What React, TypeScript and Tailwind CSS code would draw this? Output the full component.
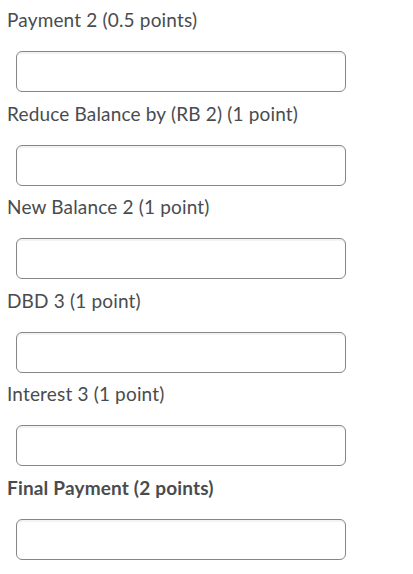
import React from "react";

const items: { label: string; bold?: boolean }[] = [
  { label: "Payment 2 (0.5 points)" },
  { label: "Reduce Balance by (RB 2) (1 point)" },
  { label: "New Balance 2 (1 point)" },
  { label: "DBD 3 (1 point)" },
  { label: "Interest 3 (1 point)" },
  { label: "Final Payment (2 points)", bold: true },
];

export default function App() {
  return (
    <div className="w-[413px] h-[574px] bg-white pl-[7px] pt-[9px] text-[#494c4e] [font-family:Lato,'Noto_Sans',sans-serif]">
      {items.map((it) => (
        <div key={it.label} className="h-[93.5px]">
          <div className={`text-[19px] leading-[22px] tracking-[0.17px] ${it.bold ? "font-bold" : "font-normal"}`}>{it.label}</div>
          <div className="mt-[20px] ml-[9px] w-[330px] h-[41px] rounded-[6px] border border-[#868686] bg-white shadow-[inset_0_2px_0_0_rgba(185,194,208,0.2)]" />
        </div>
      ))}
    </div>
  );
}
